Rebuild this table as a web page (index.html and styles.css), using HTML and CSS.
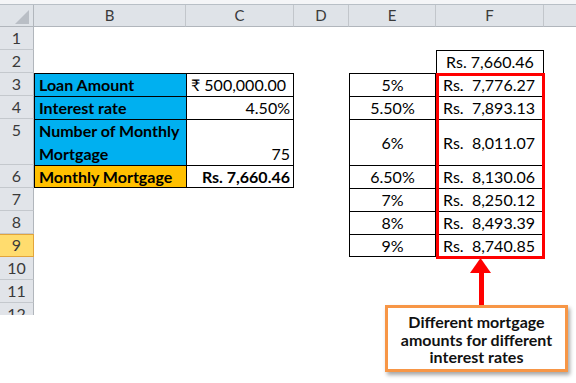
FILE: index.html
```html
<!DOCTYPE html>
<html>
<head>
<meta charset="utf-8">
<link rel="stylesheet" href="styles.css">
</head>
<body>
<div class="page">
  <div class="topbar"></div>
  <div class="sheet">
    <div class="corner"><span class="tri"></span></div>
    <div class="ch">B</div><div class="ch">C</div><div class="ch">D</div><div class="ch">E</div><div class="ch">F</div><div class="ch last"></div>

    <div class="rh">1</div><div></div><div></div><div></div><div></div><div></div><div></div>

    <div class="rh">2</div><div></div><div></div><div></div><div></div>
    <div class="cell bd br center">Rs. 7,660.46</div><div></div>

    <div class="rh">3</div>
    <div class="cell bd blue lbl">Loan Amount</div>
    <div class="cell bd br right rupee">₹ 500,000.00</div>
    <div></div>
    <div class="cell bd br center">5%</div>
    <div class="cell bt acct"><span>Rs.</span><span>7,776.27</span></div>
    <div></div>

    <div class="rh">4</div>
    <div class="cell bd blue lbl">Interest rate</div>
    <div class="cell bd br right">4.50%</div>
    <div></div>
    <div class="cell bd br center">5.50%</div>
    <div class="cell bt acct"><span>Rs.</span><span>7,893.13</span></div>
    <div></div>

    <div class="rh">5</div>
    <div class="cell bd blue lbl wrap">Number of Monthly<br>Mortgage</div>
    <div class="cell bd br right bottom">75</div>
    <div></div>
    <div class="cell bd br center">6%</div>
    <div class="cell bt acct"><span>Rs.</span><span>8,011.07</span></div>
    <div></div>

    <div class="rh">6</div>
    <div class="cell bd bb gold lbl">Monthly Mortgage</div>
    <div class="cell bd br bb right strong">Rs. 7,660.46</div>
    <div></div>
    <div class="cell bd br center">6.50%</div>
    <div class="cell bt acct"><span>Rs.</span><span>8,130.06</span></div>
    <div></div>

    <div class="rh">7</div><div></div><div></div><div></div>
    <div class="cell bd br center">7%</div>
    <div class="cell bt acct"><span>Rs.</span><span>8,250.12</span></div>
    <div></div>

    <div class="rh">8</div><div></div><div></div><div></div>
    <div class="cell bd br center">8%</div>
    <div class="cell bt acct"><span>Rs.</span><span>8,493.39</span></div>
    <div></div>

    <div class="rh sel">9</div><div></div><div></div><div></div>
    <div class="cell bd br bb center">9%</div>
    <div class="cell bt acct"><span>Rs.</span><span>8,740.85</span></div>
    <div></div>

    <div class="rh">10</div><div></div><div></div><div></div><div></div><div></div><div></div>
    <div class="rh">11</div><div></div><div></div><div></div><div></div><div></div><div></div>
    <div class="rh">12</div><div></div><div></div><div></div><div></div><div></div><div></div>
  </div>

  <div class="redbox"></div>
  <svg class="arrow" width="28" height="50" viewBox="0 0 28 50">
    <polygon points="12.5,0 2,15 23,15" fill="#ff0000"/>
    <rect x="11" y="14" width="5" height="36" fill="#ff0000"/>
  </svg>
  <div class="callout">Different mortgage<br>amounts for different<br>interest rates</div>
</div>
</body>
</html>
```
FILE: styles.css
```css
* { box-sizing: border-box; }
html, body { margin: 0; padding: 0; background: #fff; }
.page {
  position: relative;
  width: 576px;
  height: 383px;
  overflow: hidden;
  font-family: Lato, "Liberation Sans", "DejaVu Sans", sans-serif;
  color: #000;
}
.topbar {
  height: 5px;
  background: #f4f5f7;
  border-bottom: 1px solid #b8bfc6;
}
.sheet {
  display: grid;
  grid-template-columns: 34px 152px 108px 55px 87px 108px 32px;
  grid-template-rows: 22px 23px 23px 23px 23px 46px 23px 23px 23px 23px 23px 23px 23px;
  height: 310px;
  overflow: hidden;
}
.corner {
  background: #dfe3e8;
  border-right: 1px solid #b1b6bc;
  border-bottom: 1px solid #b1b6bc;
  display: flex;
  justify-content: flex-end;
  align-items: flex-end;
  padding: 0 4px 2px 0;
}
.tri {
  width: 0;
  height: 0;
  border-left: 14px solid transparent;
  border-bottom: 14px solid #b9bec5;
}
.ch {
  background: #dfe3e8;
  border-right: 1px solid #c2c6cb;
  border-bottom: 1px solid #b1b6bc;
  color: #3a3a3a;
  font-size: 15px;
  line-height: 21px;
  text-align: center;
}
.ch.last { border-right: none; }
.rh {
  background: #e1e4e9;
  border-right: 1px solid #b1b6bc;
  border-bottom: 1px solid #c4c8cd;
  color: #3a3a3a;
  font-size: 16px;
  line-height: 22px;
  text-align: center;
}
.rh.sel {
  background: #ffdc6e;
  border-right-color: #e2a43b;
  border-bottom-color: #e2a43b;
  box-shadow: inset 0 1px 0 #e2a43b;
}
.cell {
  font-size: 16px;
  line-height: 22px;
  white-space: nowrap;
  padding: 0 3px;
  display: flex;
  align-items: center;
}
.bd { border-top: 1px solid #000; border-left: 1px solid #000; }
.bt { border-top: 1px solid #000; }
.br { border-right: 1px solid #000; }
.bb { border-bottom: 1px solid #000; }
.center { justify-content: center; }
.right { justify-content: flex-end; }
.bottom { align-items: flex-end; }
.blue { background: #00b0f0; }
.gold { background: #ffc000; }
.lbl { font-weight: 700; padding-left: 4px; }
.wrap { white-space: normal; line-height: 23px; align-items: flex-end; }
.strong { font-weight: 700; }
.rupee { padding-right: 7px; }
.acct {
  justify-content: space-between;
  padding: 0 9px 0 7px;
}
.redbox {
  position: absolute;
  left: 436px;
  top: 73px;
  width: 109px;
  height: 186px;
  border: 3px solid #ff0000;
}
.arrow {
  position: absolute;
  left: 468px;
  top: 258px;
}
.callout {
  position: absolute;
  left: 385px;
  top: 305px;
  width: 183px;
  height: 67px;
  border: 3px solid #f79646;
  background: #fff;
  box-shadow: 2px 3px 4px rgba(0, 0, 0, 0.35);
  font-weight: 700;
  font-size: 16px;
  line-height: 17.5px;
  text-align: center;
  padding-top: 5px;
  color: #111;
}
```
